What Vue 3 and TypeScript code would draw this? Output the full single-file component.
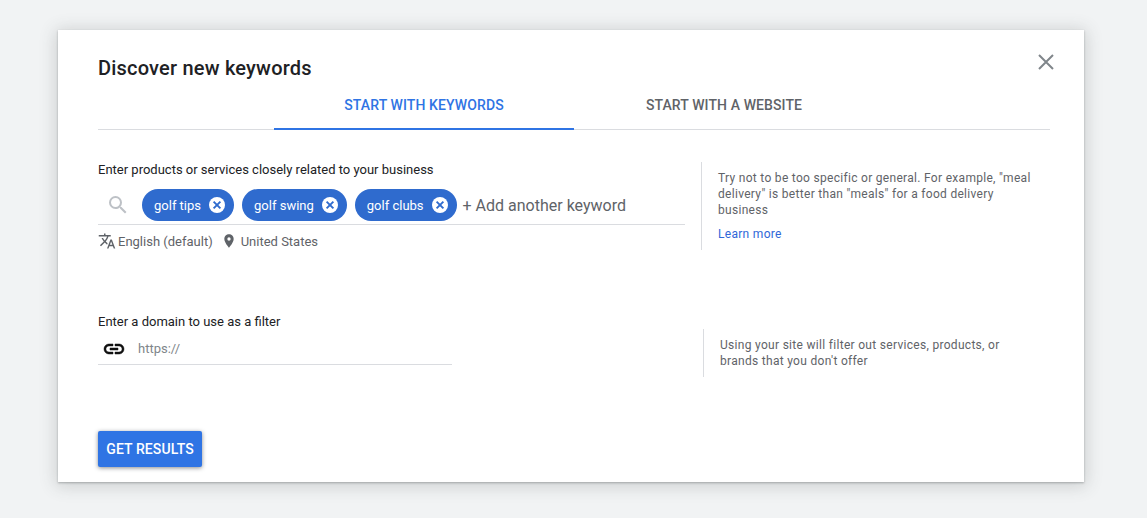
<script setup lang="ts">
const chips: string[] = ['golf tips', 'golf swing', 'golf clubs']
</script>

<template>
  <div class="page">
    <section class="modal">
      <button class="close" aria-label="Close">
        <svg width="24" height="24" viewBox="0 0 24 24"><path d="M5 5l14 14M19 5L5 19" stroke="#80868b" stroke-width="2" fill="none"/></svg>
      </button>
      <h1 class="title">Discover new keywords</h1>
      <nav class="tabs">
        <div class="tab active">START WITH KEYWORDS</div>
        <div class="tab">START WITH A WEBSITE</div>
      </nav>

      <div class="row first">
        <div class="main">
          <label class="label">Enter products or services closely related to your business</label>
          <div class="kw-input">
            <svg class="search" width="24" height="24" viewBox="0 0 24 24"><path d="M15.5 14h-.79l-.28-.27A6.47 6.47 0 0 0 16 9.5 6.5 6.5 0 1 0 9.5 16c1.61 0 3.09-.59 4.23-1.57l.27.28v.79l5 4.99L20.49 19l-4.99-5zm-6 0C7.01 14 5 11.99 5 9.5S7.01 5 9.5 5 14 7.01 14 9.5 11.99 14 9.5 14z" fill="#bdc1c6"/></svg>
            <span v-for="c in chips" :key="c" class="chip">
              {{ c }}
              <svg width="16" height="16" viewBox="0 0 16 16"><circle cx="8" cy="8" r="8" fill="#fff"/><path d="M4.6 4.6l6.8 6.8M11.4 4.6l-6.8 6.8" stroke="#2f6bce" stroke-width="1.9" fill="none"/></svg>
            </span>
            <span class="add">+ Add another keyword</span>
          </div>
          <div class="meta">
            <svg width="18" height="18" viewBox="0 0 24 24"><path d="M12.87 15.07l-2.54-2.51.03-.03A17.52 17.52 0 0 0 14.07 6H17V4h-7V2H8v2H1v1.99h11.17C11.5 7.92 10.44 9.75 9 11.35 8.07 10.32 7.3 9.19 6.69 8h-2c.73 1.63 1.73 3.17 2.98 4.56l-5.09 5.02L4 19l5-5 3.11 3.11.76-2.04zM18.5 10h-2L12 22h2l1.12-3h4.75L21 22h2l-4.5-12zm-2.62 7l1.62-4.33L19.12 17h-3.24z" fill="#5f6368"/></svg>
            <span class="lang">English (default)</span>
            <svg class="pin" width="16" height="16" viewBox="0 0 24 24"><path d="M12 2C8.13 2 5 5.13 5 9c0 5.25 7 13 7 13s7-7.75 7-13c0-3.87-3.13-7-7-7zm0 9.5a2.5 2.5 0 1 1 0-5 2.5 2.5 0 0 1 0 5z" fill="#5f6368"/></svg>
            <span class="loc">United States</span>
          </div>
        </div>
        <aside class="hint hint-a">
          <p>Try not to be too specific or general. For example, "meal delivery" is better than "meals" for a food delivery business</p>
          <a class="learn">Learn more</a>
        </aside>
      </div>

      <div class="row second">
        <div class="main">
          <label class="label">Enter a domain to use as a filter</label>
          <div class="url-input">
            <svg width="24" height="24" viewBox="0 0 24 24"><path d="M3.9 12c0-1.71 1.39-3.1 3.1-3.1h4V7H7c-2.76 0-5 2.24-5 5s2.24 5 5 5h4v-1.9H7c-1.71 0-3.1-1.39-3.1-3.1zM8 13h8v-2H8v2zm9-6h-4v1.9h4c1.71 0 3.1 1.39 3.1 3.1s-1.39 3.1-3.1 3.1h-4V17h4c2.76 0 5-2.24 5-5s-2.24-5-5-5z" fill="#111" stroke="#111" stroke-width="0.5"/></svg>
            <span class="placeholder">https://</span>
          </div>
        </div>
        <aside class="hint hint-b">
          <p>Using your site will filter out services, products, or brands that you don't offer</p>
        </aside>
      </div>

      <button class="cta">GET RESULTS</button>
    </section>
  </div>
</template>

<style>
body { margin: 0; background: #f1f3f4; }
</style>

<style scoped>
.page {
  height: 518px;
  box-sizing: border-box;
  padding: 30px 63px 36px 58px;
  font-family: Roboto, "Liberation Sans", sans-serif;
  overflow: hidden;
}
.modal {
  position: relative;
  height: 452px;
  box-sizing: border-box;
  padding: 26px 34px 15px 40px;
  background: #fff;
  box-shadow: 0 1px 2px rgba(60, 64, 67, 0.35), 0 2px 16px 2px rgba(60, 64, 67, 0.2);
  display: flex;
  flex-direction: column;
}
.close {
  position: absolute;
  top: 20px;
  right: 26px;
  padding: 0;
  border: 0;
  background: none;
  width: 24px;
  height: 24px;
}
.title {
  margin: 0;
  font-size: 20px;
  line-height: 24px;
  font-weight: 500;
  letter-spacing: 0.2px;
  color: #202124;
}
.tabs {
  display: flex;
  padding-left: 176px;
  height: 48px;
  margin-top: 1px;
  margin-bottom: 32px;
  border-bottom: 1px solid #dadce0;
}
.tab {
  width: 300px;
  height: 48px;
  box-sizing: border-box;
  padding-top: 14px;
  text-align: center;
  font-size: 14px;
  line-height: 20px;
  font-weight: 500;
  letter-spacing: 0.1px;
  color: #5f6368;
}
.tab.active {
  color: #2f74e4;
  border-bottom: 2px solid #2f74e4;
  height: 49px;
}
.row { display: flex; }
.second { margin-top: 57px; }
.main { width: 587px; flex: none; }
.label {
  display: block;
  font-size: 13px;
  line-height: 16px;
  color: #202124;
}
.kw-input {
  display: flex;
  align-items: center;
  height: 38px;
  margin-top: 8px;
  border-bottom: 1px solid #dadce0;
  padding-left: 8px;
}
.search { margin-right: 12px; }
.chip {
  display: inline-flex;
  align-items: center;
  box-sizing: border-box;
  height: 32px;
  border-radius: 16px;
  padding: 0 9px 0 12px;
  margin-right: 8px;
  background: #2f6bce;
  color: #fff;
  font-size: 13px;
  gap: 8px;
  white-space: nowrap;
}
.add {
  margin-left: -2px;
  font-size: 16px;
  color: #5f6368;
}
.meta {
  display: flex;
  align-items: center;
  height: 32px;
  font-size: 13px;
  color: #5f6368;
}
.lang { margin-left: 2px; }
.pin { margin-left: 8px; }
.loc { margin-left: 4px; }
.hint {
  border-left: 1px solid #dadce0;
  box-sizing: border-box;
  font-size: 12px;
  line-height: 16px;
  color: #5f6368;
  letter-spacing: 0.3px;
}
.hint p { margin: 0; }
.hint-a {
  margin-left: 16px;
  height: 88px;
  width: 345px;
  padding: 8px 0 0 16px;
}
.second .main { width: 354px; margin-right: 251px; }
.hint-b {
  margin-top: 15px;
  height: 48px;
  width: 330px;
  padding: 8px 0 0 16px;
}
.learn {
  display: block;
  margin-top: 8px;
  color: #2f67d8;
}
.url-input {
  display: flex;
  align-items: center;
  height: 31px;
  margin-top: 3px;
  border-bottom: 1px solid #dadce0;
  padding-left: 4px;
}
.placeholder {
  margin-left: 12px;
  font-size: 13px;
  color: #80868b;
}
.cta {
  margin-top: auto;
  align-self: flex-start;
  width: 104px;
  height: 36px;
  border: 0;
  border-radius: 2px;
  background: #2f74e4;
  color: #fff;
  font-family: inherit;
  font-size: 14px;
  letter-spacing: 0.1px;
  font-weight: 500;
  box-shadow: 0 1px 4px rgba(60, 64, 67, 0.6);
  padding: 0;
}
</style>
